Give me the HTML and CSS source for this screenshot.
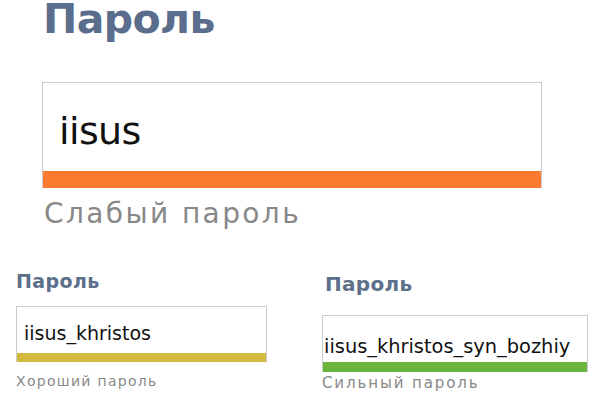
FILE: index.html
```html
<!DOCTYPE html>
<html lang="ru">
<head>
<meta charset="utf-8">
<title>Пароль</title>
<link rel="stylesheet" href="styles.css">
</head>
<body>
<div class="page">
  <section class="main">
    <h1 class="title">Пароль</h1>
    <div class="field field-big">
      <div class="value">iisus</div>
      <div class="bar bar-weak"></div>
    </div>
    <div class="hint hint-big">Слабый пароль</div>
  </section>
  <div class="row">
    <section class="group group-left">
      <h2 class="subtitle">Пароль</h2>
      <div class="field field-left">
        <div class="value">iisus_khristos</div>
        <div class="bar bar-good"></div>
      </div>
      <div class="hint hint-left">Хороший пароль</div>
    </section>
    <section class="group group-right">
      <h2 class="subtitle">Пароль</h2>
      <div class="field field-right">
        <div class="value">iisus_khristos_syn_bozhiy</div>
        <div class="bar bar-strong"></div>
      </div>
      <div class="hint hint-right">Сильный пароль</div>
    </section>
  </div>
</div>
</body>
</html>
```

FILE: styles.css
```css
* { box-sizing: border-box; }
html, body {
  margin: 0;
  padding: 0;
  background: #ffffff;
}
body {
  width: 604px;
  height: 410px;
  overflow: hidden;
  font-family: "DejaVu Sans", Verdana, sans-serif;
}
.page {
  display: flex;
  flex-direction: column;
}
.main {
  padding-left: 42px;
  display: flex;
  flex-direction: column;
}
.title {
  margin: 0 0 0 1px;
  font-size: 41px;
  line-height: 38px;
  font-weight: bold;
  color: #5a6d8c;
  letter-spacing: -0.6px;
}
.field {
  display: flex;
  flex-direction: column;
  border: 1px solid #c6cbd6;
  border-bottom: none;
  background: #fff;
}
.value {
  color: #111;
  white-space: nowrap;
}
.field-big {
  margin-top: 44px;
  width: 500px;
}
.field-big .value {
  font-size: 38px;
  line-height: 38px;
  padding: 29px 0 21px 16px;
  letter-spacing: -0.6px;
}
.field-big .bar { height: 17px; }
.bar-weak { background: #fb7a30; }
.bar-good { background: #d4b940; }
.bar-strong { background: #69b53d; }
.hint {
  color: #888888;
  white-space: nowrap;
}
.hint-big {
  margin-top: 12px;
  padding-left: 2px;
  font-size: 28px;
  line-height: 28px;
  letter-spacing: 2.4px;
}
.row {
  display: flex;
  margin-top: 44px;
}
.subtitle {
  margin: 0;
  font-size: 19px;
  line-height: 19px;
  font-weight: bold;
  color: #5d6f8a;
  letter-spacing: 0.4px;
}
.group { display: flex; flex-direction: column; }
.group-left {
  margin-left: 16px;
  width: 251px;
}
.group-right {
  margin-left: 55px;
  margin-top: 2px;
  width: 266px;
}
.group-right .subtitle {
  padding-left: 3px;
  font-size: 20px;
  line-height: 20px;
  letter-spacing: 0.3px;
}
.field-left { margin-top: 15px; }
.field-left .value {
  font-size: 19px;
  line-height: 19px;
  padding: 17px 0 10px 7px;
}
.field-left .bar { height: 9px; }
.field-right { margin-top: 21px; }
.field-right .value {
  font-size: 19.4px;
  line-height: 20px;
  padding: 21px 0 5px 1px;
}
.field-right .bar { height: 10px; }
.hint-left {
  margin-top: 12px;
  font-size: 14px;
  line-height: 14px;
  letter-spacing: 1.3px;
}
.hint-right {
  margin-top: 4px;
  font-size: 15px;
  line-height: 15px;
  letter-spacing: 1.9px;
}
```
